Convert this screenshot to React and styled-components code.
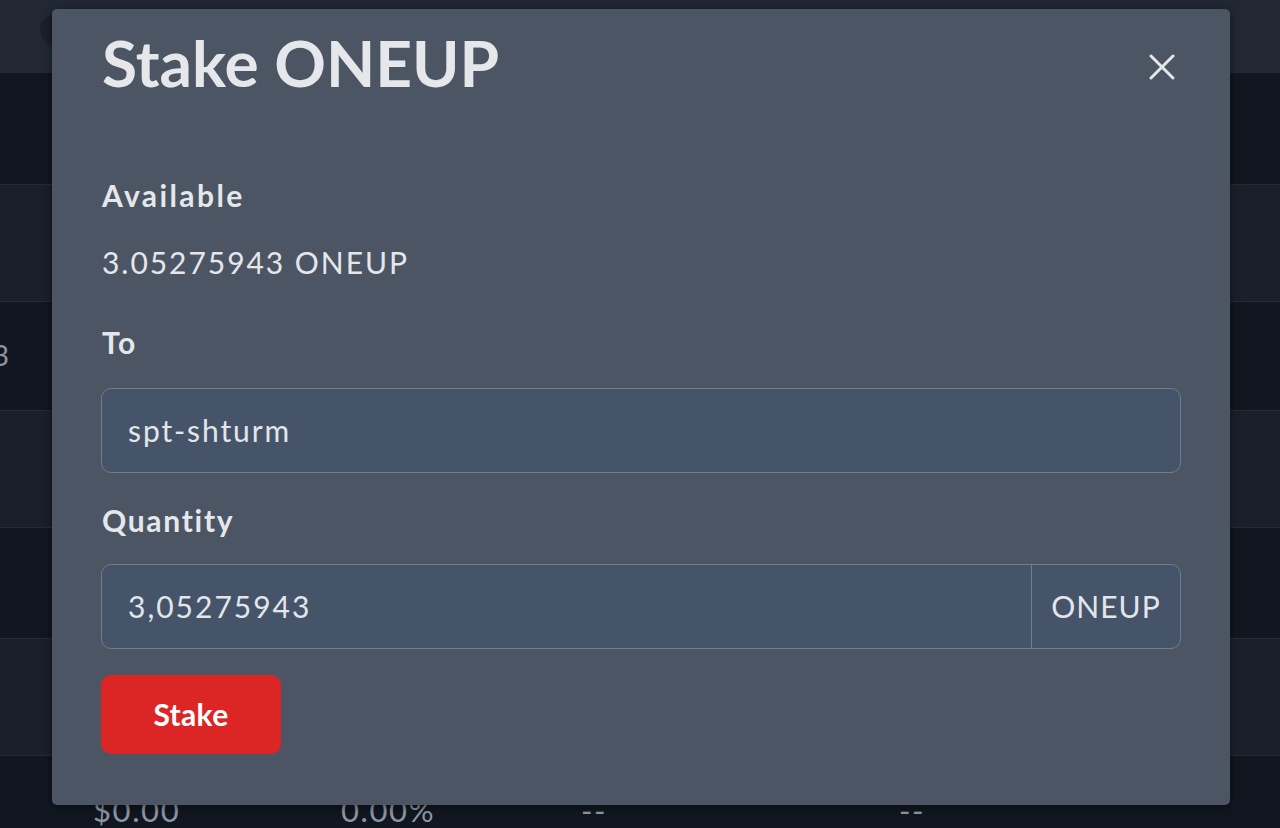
import React from "react";
import styled, { createGlobalStyle } from "styled-components";

const Global = createGlobalStyle`
  html, body { margin: 0; padding: 0; }
  body {
    background: #111720;
    font-family: Lato, "Noto Sans", sans-serif;
    overflow: hidden;
  }
  * { box-sizing: border-box; }
`;

const Page = styled.div`
  position: relative;
  width: 1280px;
  height: 828px;
  overflow: hidden;
  background: #111720;
  display: flex;
  flex-direction: column;
`;

const TopBar = styled.div`
  height: 72px;
  flex: none;
  background: #222833;
  display: flex;
  align-items: center;
  padding-left: 40px;
`;

const Avatar = styled.div`
  width: 30px;
  height: 30px;
  border-radius: 50%;
  background: #1b2029;
  margin-top: -12px;
`;

const Row = styled.div`
  height: ${(p) => p.$h}px;
  flex: none;
  background: ${(p) => (p.$alt ? "#1a1f29" : "#111720")};
  border-top: 1px solid #252b36;
  display: grid;
  grid-template-columns: ${(p) => p.$cols || "1fr"};
  align-items: ${(p) => (p.$top ? "start" : "center")};
  padding-left: ${(p) => p.$pad || 0}px;
  padding-top: ${(p) => p.$top || 0}px;
`;

const Cell = styled.div`
  font-family: Lato, sans-serif;
  font-size: 31px;
  line-height: 1.2;
  color: #8e96a3;
  white-space: nowrap;
  letter-spacing: 1.6px;
`;

const ClippedCell = styled(Cell)`
  width: 9px;
  overflow: hidden;
  display: flex;
  justify-content: flex-end;
  font-size: 28px;
  letter-spacing: 0;
`;

const Modal = styled.div`
  position: absolute;
  left: 52px;
  top: 9px;
  width: 1178px;
  height: 796px;
  background: #4b5563;
  border-radius: 5px;
  box-shadow: 0 2px 10px rgba(0, 0, 0, 0.5);
  padding: 16px 49px 0 49px;
  display: flex;
  flex-direction: column;
`;

const Header = styled.div`
  display: flex;
  justify-content: space-between;
  align-items: flex-start;
  padding-left: 1px;
`;

const Title = styled.h2`
  margin: 0;
  font-family: Lato, sans-serif;
  font-weight: 700;
  font-size: 64px;
  line-height: 1.2;
  color: #e5e7eb;
  letter-spacing: 0;
`;

const CloseButton = styled.button`
  width: 40px;
  height: 40px;
  margin-top: 22px;
  margin-right: -1px;
  border: none;
  background: transparent;
  padding: 0;
  display: flex;
  align-items: center;
  justify-content: center;
  color: #e5e7eb;
  cursor: pointer;
`;

const Label = styled.div`
  margin-top: ${(p) => p.$mt}px;
  padding-left: 1px;
  font-family: Lato, sans-serif;
  font-weight: 700;
  font-size: 30px;
  line-height: 1.2;
  color: #e5e7eb;
  letter-spacing: ${(p) => p.$ls || 0}px;
`;

const Value = styled.div`
  margin-top: ${(p) => p.$mt}px;
  padding-left: 1px;
  font-family: Lato, sans-serif;
  font-weight: 400;
  font-size: 30px;
  line-height: 1.2;
  color: #e5e7eb;
  letter-spacing: 1.95px;
`;

const InputGroup = styled.div`
  margin-top: ${(p) => p.$mt}px;
  height: 85px;
  display: flex;
  border: 1.5px solid #6f7c8e;
  border-radius: 10px;
  background: #465469;
  overflow: hidden;
`;

const InputText = styled.div`
  flex: 1;
  display: flex;
  align-items: center;
  padding-left: 26px;
  font-family: Lato, sans-serif;
  font-size: 30px;
  color: #e2e6ec;
  letter-spacing: ${(p) => p.$ls || 0}px;
`;

const Addon = styled.div`
  width: 149px;
  flex: none;
  border-left: 1.5px solid #6f7c8e;
  display: flex;
  align-items: center;
  justify-content: center;
  font-family: Lato, sans-serif;
  font-size: 30px;
  color: #e2e6ec;
  letter-spacing: 1px;
`;

const StakeButton = styled.button`
  margin-top: 26px;
  width: 180px;
  height: 79px;
  border: none;
  border-radius: 10px;
  background: #dc2626;
  color: #ffffff;
  font-family: Lato, sans-serif;
  font-weight: 700;
  font-size: 30px;
  letter-spacing: 0.3px;
  cursor: pointer;
  align-self: flex-start;
`;

export default function App() {
  return (
    <>
      <Global />
      <Page>
        <TopBar>
          <Avatar />
        </TopBar>
        <Row $h={112} />
        <Row $h={117} $alt />
        <Row $h={109}>
          <ClippedCell>
            <span>3</span>
          </ClippedCell>
        </Row>
        <Row $h={117} $alt />
        <Row $h={111} />
        <Row $h={117} $alt />
        <Row $h={113} $cols="248px 240px 318px 1fr" $pad={93} $top={36}>
          <Cell>$0.00</Cell>
          <Cell>0.00%</Cell>
          <Cell>--</Cell>
          <Cell>--</Cell>
        </Row>
        <Modal>
          <Header>
            <Title>Stake ONEUP</Title>
            <CloseButton aria-label="Close">
              <svg width="26" height="26" viewBox="0 0 26 26">
                <path
                  d="M2 2 L24 24 M24 2 L2 24"
                  stroke="currentColor"
                  strokeWidth="3"
                  strokeLinecap="round"
                />
              </svg>
            </CloseButton>
          </Header>
          <Label $mt={75} $ls={2.4}>Available</Label>
          <Value $mt={31}>3.05275943 ONEUP</Value>
          <Label $mt={44} $ls={1.5}>To</Label>
          <InputGroup $mt={28}>
            <InputText $ls={1.9}>spt-shturm</InputText>
          </InputGroup>
          <Label $mt={29} $ls={1.7}>Quantity</Label>
          <InputGroup $mt={26}>
            <InputText $ls={2}>3,05275943</InputText>
            <Addon>ONEUP</Addon>
          </InputGroup>
          <StakeButton>Stake</StakeButton>
        </Modal>
      </Page>
    </>
  );
}
